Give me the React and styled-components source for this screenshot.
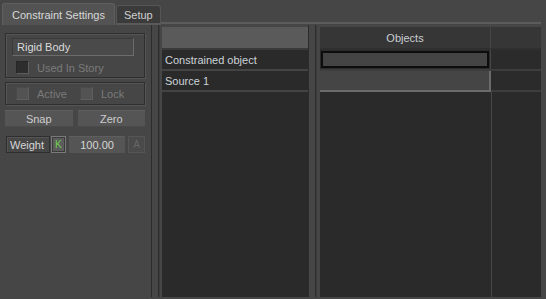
import React from "react";
import styled, { createGlobalStyle } from "styled-components";

const Global = createGlobalStyle`
  html, body { margin: 0; padding: 0; background: #464646; }
  body { font-family: "Liberation Sans", Arial, sans-serif; font-size: 11px; }
  * { box-sizing: border-box; }
`;

const Root = styled.div`
  width: 546px;
  height: 299px;
  background: #464646;
  display: flex;
  flex-direction: column;
  overflow: hidden;
  color: #d4d4d4;
`;

const TabStrip = styled.div`
  height: 25px;
  display: flex;
  align-items: flex-end;
  padding-left: 2px;
`;

const Tab = styled.div`
  height: ${(p) => (p.$active ? 22 : 20)}px;
  padding: 0 ${(p) => (p.$active ? 9 : 7)}px;
  margin-right: ${(p) => (p.$active ? 1 : 0)}px;
  display: flex;
  align-items: center;
  background: ${(p) => (p.$active ? "#535353" : "#3b3b3b")};
  border: 1px solid ${(p) => (p.$active ? "#5f5f5f" : "#555")};
  border-bottom: ${(p) => (p.$active ? "none" : "2px solid #5a5a5a")};
  border-radius: 3px 3px 0 0;
  color: ${(p) => (p.$active ? "#d8d8d8" : "#cfcfcf")};
  white-space: nowrap;
`;

const TabFill = styled.div`
  flex: 1;
  height: 2px;
  margin-bottom: 1px;
  margin-right: 5px;
  background: #5c5c5c;
`;

const Body = styled.div`
  flex: 1;
  display: flex;
  padding: 2px 5px 2px 0;
`;

const LeftPanel = styled.div`
  width: 151px;
  margin-top: -2px;
  padding: 8px 6px 0 5px;
  display: flex;
  flex-direction: column;
`;

const Group = styled.div`
  border: 1px solid #2e2e2e;
  box-shadow: inset 1px 1px 0 #555, 1px 1px 0 #555;
  padding: ${(p) => p.$pad};
  display: flex;
  flex-direction: ${(p) => (p.$row ? "row" : "column")};
  gap: ${(p) => p.$gap || 0}px;
  margin-bottom: ${(p) => p.$mb || 0}px;
  height: ${(p) => p.$h}px;
`;

const TextField = styled.div`
  height: 18px;
  width: 122px;
  padding: 2px 4px;
  background: #4a4a4a;
  border-top: 1px solid #3a3a3a;
  border-left: 1px solid #3a3a3a;
  border-right: 1px solid #6c6c6c;
  border-bottom: 1px solid #6c6c6c;
  color: #dadada;
`;

const Check = styled.label`
  display: flex;
  align-items: center;
  gap: 8px;
  color: #7a7a7a;
  margin-left: ${(p) => p.$ml || 0}px;
  width: ${(p) => p.$w || "auto"};
`;

const Box = styled.span`
  width: 13px;
  height: 13px;
  background: ${(p) => (p.$dark ? "#2d2d2d" : "#535353")};
  border-top: 1px solid ${(p) => (p.$dark ? "#262626" : "#4a4a4a")};
  border-left: 1px solid ${(p) => (p.$dark ? "#262626" : "#4a4a4a")};
  border-right: 1px solid #5e5e5e;
  border-bottom: 1px solid #5e5e5e;
`;

const ButtonRow = styled.div`
  display: flex;
  gap: 5px;
  margin-top: 5px;
`;

const Button = styled.div`
  flex: 1;
  height: 17px;
  display: flex;
  align-items: center;
  justify-content: center;
  background: #555;
  border-top: 1px solid #5e5e5e;
  border-bottom: 1px solid #4a4a4a;
  color: #cdcdcd;
`;

const WeightRow = styled.div`
  display: flex;
  align-items: stretch;
  height: 17px;
  margin-top: 9px;
  gap: 2px;
`;

const Label = styled.div`
  width: 45px;
  margin-left: 1px;
  padding-left: 3px;
  display: flex;
  align-items: center;
  border: 1px solid #2e2e2e;
  box-shadow: inset 1px 1px 0 #555;
  color: #d6d6d6;
`;

const Key = styled.div`
  width: 15px;
  margin-left: -1px;
  display: flex;
  align-items: center;
  justify-content: center;
  background: #5c5c5c;
  color: ${(p) => (p.$on ? "#6fd04c" : "#666")};
  border: 1px solid ${(p) => (p.$on ? "#7a7a7a" : "#555")};
  box-shadow: inset 0 0 0 1px ${(p) => (p.$on ? "#3a3a3a" : "#4a4a4a")};
  font-size: 10px;
  ${(p) => (!p.$on ? "background: #4a4a4a; width: 17px; margin-left: 1px;" : "")}
`;

const Value = styled.div`
  width: 58px;
  margin-left: 1px;
  display: flex;
  align-items: center;
  justify-content: center;
  background: #555;
  border-top: 1px solid #5e5e5e;
  color: #d6d6d6;
`;

const Splitter = styled.div`
  width: ${(p) => p.$w}px;
  border-left: 1px solid #2c2c2c;
  margin-top: -2px;
  background: linear-gradient(
    to right,
    transparent ${(p) => p.$line}px,
    #2e2e2e ${(p) => p.$line}px,
    #2e2e2e ${(p) => p.$line + 1}px,
    #3c3c3c ${(p) => p.$line + 1}px,
    #3c3c3c ${(p) => p.$line + 2}px,
    transparent ${(p) => p.$line + 2}px
  );
`;

const Panel = styled.div`
  width: ${(p) => p.$w}px;
  background: #2a2a2a;
  display: flex;
  flex-direction: column;
`;

const ListHeader = styled.div`
  height: 23px;
  background: #5a5a5a;
  border-bottom: 2px solid #3a3a3a;
`;

const ListRow = styled.div`
  height: 21px;
  padding: 0 3px;
  display: flex;
  align-items: center;
  border-bottom: 2px solid #444;
  color: #cdd3d9;
`;

const Grid = styled.div`
  flex: 1;
  display: grid;
  grid-template-columns: 171px 1fr;
  grid-template-rows: 23px 21px 21px 1fr;
  background: linear-gradient(to right, transparent 171px, #474747 171px, #474747 172px, transparent 172px);
`;

const HeadCell = styled.div`
  background: #363636;
  border-bottom: 2px solid #2f2f2f;
  border-right: ${(p) => (p.$first ? "1px solid #474747" : "none")};
  display: flex;
  align-items: center;
  justify-content: center;
  color: #c9cdd2;
`;

const Cell = styled.div`
  border-bottom: 2px solid #3d3d3d;
  border-right: ${(p) => (p.$first ? "1px solid #474747" : "none")};
  background: #2b2b2b;
  padding: ${(p) => (p.$edit ? "1px" : 0)};
`;

const EditBox = styled.div`
  width: 100%;
  height: 100%;
  background: #444;
  border: 2px solid #0d0d0d;
`;

const RaisedCell = styled.div`
  background: #454545;
  border-right: 2px solid #6b6b6b;
  border-bottom: 2px solid #6b6b6b;
`;

export default function App() {
  return (
    <Root>
      <Global />
      <TabStrip>
        <Tab $active>Constraint Settings</Tab>
        <Tab>Setup</Tab>
        <TabFill />
      </TabStrip>
      <Body>
        <LeftPanel>
          <Group $pad="4px 10px 0 6px" $gap={5} $h={45} $mb={4}>
            <TextField>Rigid Body</TextField>
            <Check style={{ marginLeft: 4 }}>
              <Box $dark />
              Used In Story
            </Check>
          </Group>
          <Group $row $pad="0 0 0 10px" $h={23}>
            <Check $w="64px">
              <Box />
              Active
            </Check>
            <Check>
              <Box />
              Lock
            </Check>
          </Group>
          <ButtonRow>
            <Button>Snap</Button>
            <Button>Zero</Button>
          </ButtonRow>
          <WeightRow>
            <Label>Weight</Label>
            <Key $on>K</Key>
            <Value>100.00</Value>
            <Key>A</Key>
          </WeightRow>
        </LeftPanel>
        <Splitter $w={11} $line={6} />
        <Panel $w={146}>
          <ListHeader />
          <ListRow>Constrained object</ListRow>
          <ListRow>Source 1</ListRow>
        </Panel>
        <Splitter $w={12} $line={6} />
        <Panel $w={221}>
          <Grid>
            <HeadCell $first>Objects</HeadCell>
            <HeadCell />
            <Cell $first $edit>
              <EditBox />
            </Cell>
            <Cell />
            <RaisedCell />
            <Cell />
          </Grid>
        </Panel>
      </Body>
    </Root>
  );
}
